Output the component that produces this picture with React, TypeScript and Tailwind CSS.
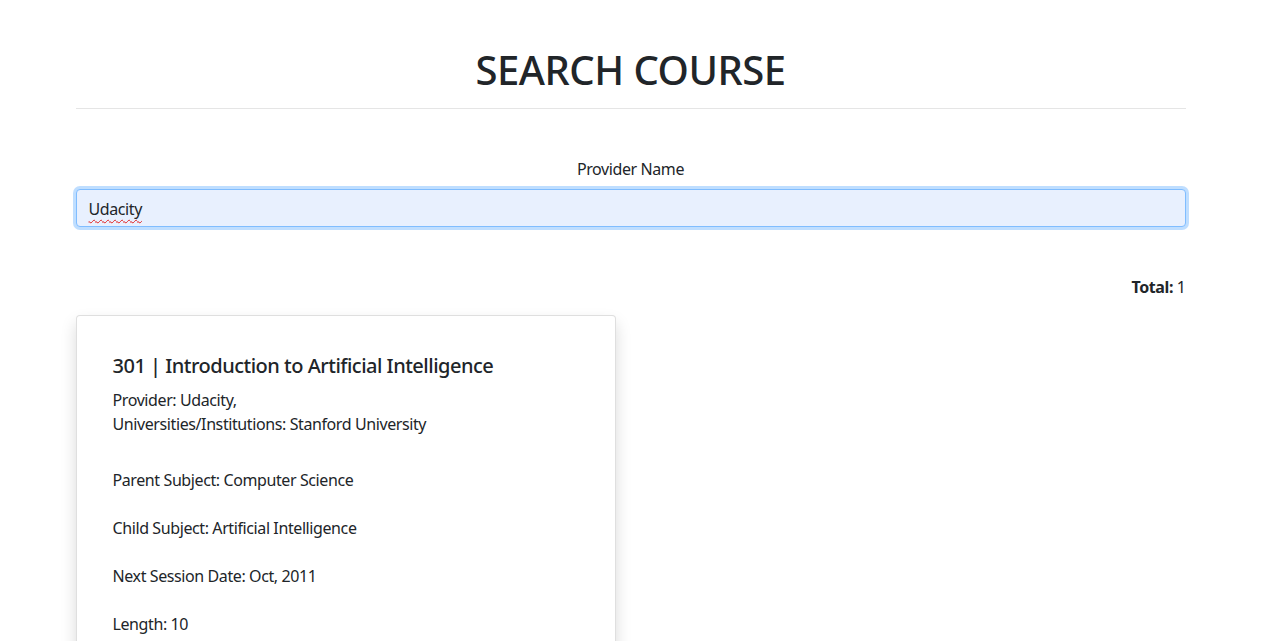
import React from "react";

export default function App() {
  const font = { fontFamily: '"Segoe UI", "Noto Sans", "Open Sans", sans-serif' };
  return (
    <div className="min-h-screen bg-white text-[#212529] tracking-[-0.4px]" style={font}>
      <div className="mx-auto w-[1110px] pt-[46px]">
        <h1 className="text-center text-[40px] font-medium leading-[48px] tracking-[-0.5px]">SEARCH COURSE</h1>
        <hr className="mt-[14px] border-0 border-t border-[rgba(0,0,0,0.1)]" />
        <div className="mt-[48px] text-center text-[16px] leading-[24px]">Provider Name</div>
        <div className="mt-[8px]">
          <div className="flex h-[38px] w-full items-center rounded-[4px] border border-[#80bdff] bg-[#e8f0fe] px-[12px] pt-[2px] text-[16px] text-[#212529] shadow-[0_0_0_3px_rgba(0,123,255,0.25)]">
            <span className="underline decoration-wavy decoration-[#e02020] decoration-[1px] underline-offset-[4px]">Udacity</span>
          </div>
        </div>
        <div className="mt-[48px] text-right text-[16px] leading-[24px]">
          <b className="font-bold">Total:</b> 1
        </div>
        <div className="mt-[16px] grid grid-cols-2 gap-[30px]">
          <div className="rounded-[4px] border border-[rgba(0,0,0,0.125)] bg-white px-[36px] pt-[38px] pb-[36px] shadow-[0_8px_16px_rgba(0,0,0,0.15)]">
            <h5 className="text-[20px] font-medium leading-[24px] tracking-[-0.5px]">301 | Introduction to Artificial Intelligence</h5>
            <div className="mt-[10px] text-[16px] leading-[24px]">
              <div>Provider: Udacity,</div>
              <div>Universities/Institutions: Stanford University</div>
            </div>
            <div className="mt-[32px] flex flex-col gap-[24px] text-[16px] leading-[24px]">
              <div>Parent Subject: Computer Science</div>
              <div>Child Subject: Artificial Intelligence</div>
              <div>Next Session Date: Oct, 2011</div>
              <div>Length: 10</div>
            </div>
          </div>
          <div />
        </div>
      </div>
    </div>
  );
}
